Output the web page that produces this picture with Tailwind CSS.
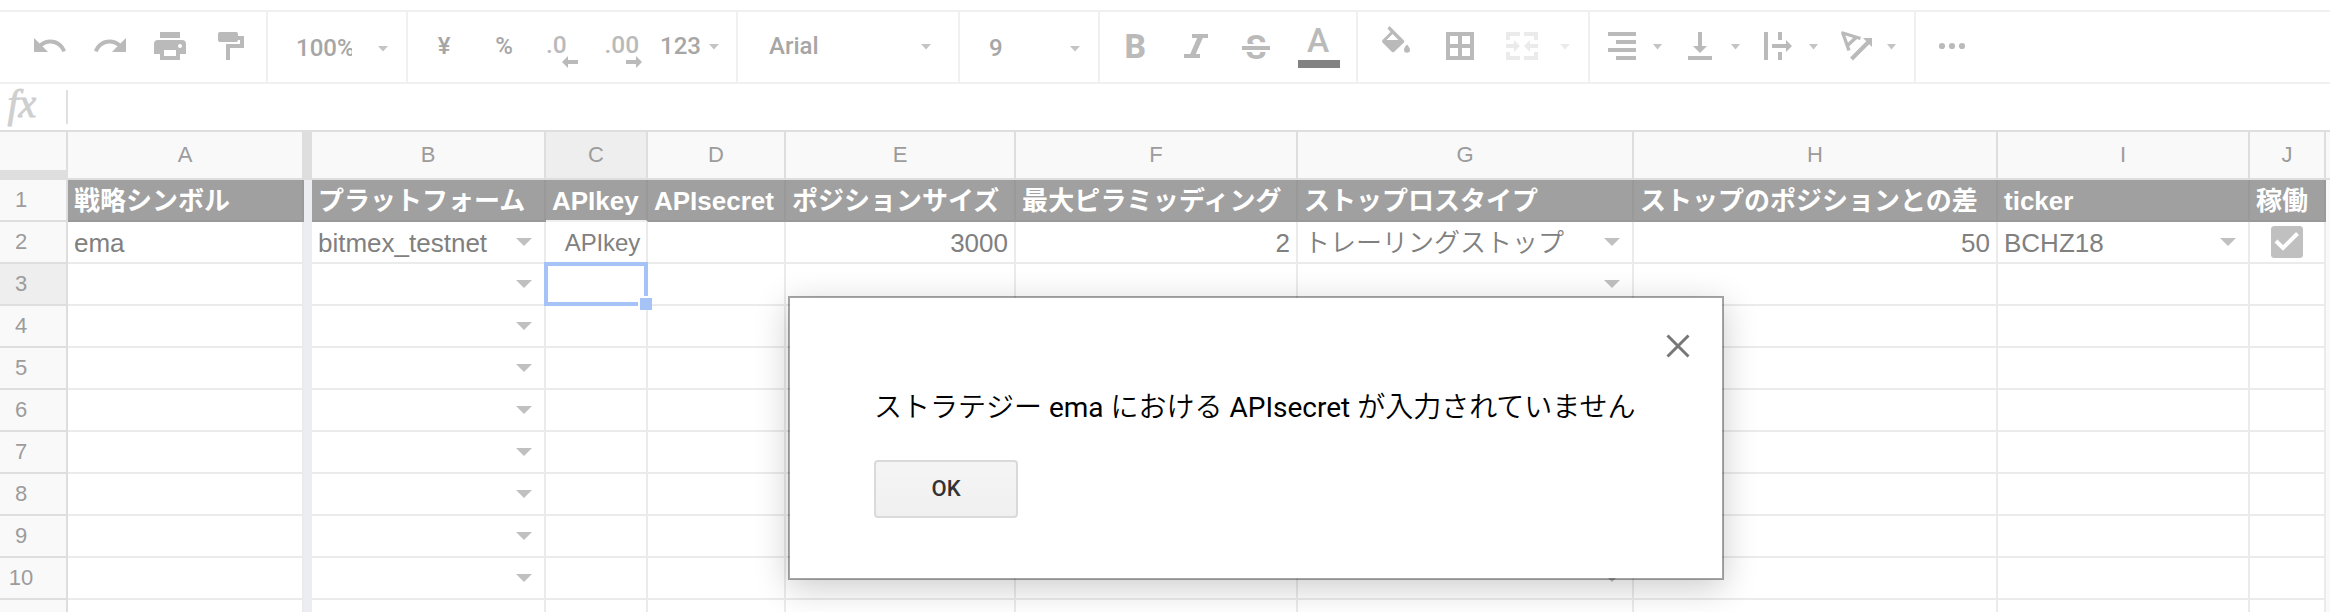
<!DOCTYPE html>
<html lang="ja">
<head>
<meta charset="utf-8">
<title>Spreadsheet</title>
<script src="https://cdn.jsdelivr.net/npm/@tailwindcss/browser@4"></script>
</head>
<body class="relative h-[612px] w-[2330px] overflow-hidden bg-white font-['Liberation_Sans','Noto_Sans_CJK_JP',sans-serif]">

<!-- Toolbar -->
<header class="mt-2.5 flex h-[74px] border-y-2 border-[#f0f0f0] font-[Roboto,sans-serif] text-[24px] leading-9 font-medium text-[#a6a6a6]">
  <div class="flex w-[268px] gap-6 border-r-2 border-[#f0f0f0] pt-4 pl-8">
    <svg class="size-9 fill-[#bababa]" viewBox="0 0 36 36"><path transform="translate(-1.13 -.9) scale(1.563 1.556)" d="M12.5 8c-2.65 0-5.05.99-6.9 2.6L2 7v9h9l-3.62-3.62c1.39-1.16 3.16-1.88 5.12-1.88 3.54 0 6.55 2.31 7.6 5.5l2.37-.78C21.08 11.03 17.15 8 12.5 8z"/></svg>
    <svg class="size-9 fill-[#bababa]" viewBox="0 0 36 36"><path transform="translate(-.4 -.9) scale(1.563 1.556)" d="M18.4 10.6C16.55 8.99 14.15 8 11.5 8c-4.65 0-8.58 3.03-9.96 7.22L3.9 16c1.05-3.19 4.05-5.5 7.6-5.5 1.95 0 3.73.72 5.12 1.88L13 16h9V7l-3.6 3.6z"/></svg>
    <svg class="size-9 fill-[#bababa]" viewBox="0 0 36 36"><path fill-rule="evenodd" d="M8 4H28V10H8zM6 12H30a4 4 0 0 1 4 4V26H28V32H8V26H2V16a4 4 0 0 1 4-4zM12 22V28H24V22zM28 16a2 2 0 1 0 0 4 2 2 0 0 0 0-4z"/></svg>
    <svg class="size-9 fill-[#bababa]" viewBox="0 0 36 36"><path d="M8 4H24a2 2 0 0 1 2 2V8H32V20H18V32H14V16H28V12H26a2 2 0 0 1-2 2H8a2 2 0 0 1-2-2V6a2 2 0 0 1 2-2z"/></svg>
  </div>
  <div class="flex w-[140px] border-r-2 border-[#f0f0f0] pt-[18px] pl-7">
    <span class="w-14 overflow-hidden">100%</span>
    <svg class="mt-4 ml-[26px] h-1.5 w-2.5 fill-[#c4c4c4]" viewBox="0 0 10 6"><path d="M0 0H10L5 5.5z"/></svg>
  </div>
  <div class="flex w-[330px] border-r-2 border-[#f0f0f0] pt-4 pl-[18px]">
    <span class="w-9 text-center">¥</span>
    <span class="ml-6 w-9 text-center">%</span>
    <svg class="ml-6 size-9 overflow-visible fill-[#bababa]" viewBox="0 0 36 36"><text x="0" y="25" font-size="24.500">.0</text><path d="M16 34L22 28V32H32V36H22V40z"/></svg>
    <svg class="ml-6 size-9 overflow-visible fill-[#bababa]" viewBox="0 0 36 36"><text x="-1.500" y="25" font-size="24.500">.00</text><path d="M36 34L30 28V32H20V36H30V40z"/></svg>
    <span class="ml-[18px] w-[49px]">123</span>
    <svg class="mt-4 h-1.5 w-2.5 fill-[#c4c4c4]" viewBox="0 0 10 6"><path d="M0 0H10L5 5.5z"/></svg>
  </div>
  <div class="flex w-[222px] border-r-2 border-[#f0f0f0] pt-4 pl-[31px]">
    <span class="w-[152px]">Arial</span>
    <svg class="mt-4 h-1.5 w-2.5 fill-[#c4c4c4]" viewBox="0 0 10 6"><path d="M0 0H10L5 5.5z"/></svg>
  </div>
  <div class="flex w-[140px] border-r-2 border-[#f0f0f0] pt-[18px] pl-[29px]">
    <span class="w-[81px]">9</span>
    <svg class="mt-4 h-1.5 w-2.5 fill-[#c4c4c4]" viewBox="0 0 10 6"><path d="M0 0H10L5 5.5z"/></svg>
  </div>
  <div class="flex w-[258px] gap-6 border-r-2 border-[#f0f0f0] pt-4 pl-[18px]">
    <svg class="size-9 overflow-visible fill-[#bababa]" viewBox="0 0 36 36"><text x="6.500" y="30" font-size="33.5" font-weight="800">B</text></svg>
    <svg class="size-9 fill-[#bababa]" viewBox="0 0 36 36"><path d="M14 6H30V10H24.800L17.800 26H22V30H6V26H12.200L19.200 10H14z"/></svg>
    <svg class="size-9 overflow-visible fill-[#bababa]" viewBox="0 0 36 36"><text x="18" y="30.500" font-size="34" font-weight="700" text-anchor="middle">S</text><path fill="#fff" d="M0 16H36V24H0z"/><path d="M4 18H32V22H4z"/></svg>
    <svg class="h-11 w-[42px] overflow-visible" viewBox="0 0 42 44"><text x="20" y="24" font-size="33.5" font-weight="500" text-anchor="middle" fill="#bababa">A</text><path fill="#828282" d="M0 32H42V40H0z"/></svg>
  </div>
  <div class="flex w-[232px] border-r-2 border-[#f0f0f0] pt-4 pl-[22px]">
    <svg class="size-9 overflow-visible fill-[#bababa]" viewBox="0 0 36 36"><path fill-rule="evenodd" d="M9.500-2L24 12.500a2 2 0 0 1 0 2L14.500 23.500a2 2 0 0 1-3 0L2.500 14.500a2 2 0 0 1 0-2.500L10.500 4 7.500 .5zM12.500 6L6.500 12H18.500zM27 16.500s3 3.200 3 5.200a3 3 0 0 1-6 0c0-2 3-5.200 3-5.200z"/></svg>
    <svg class="ml-[26px] size-9 fill-[#bababa]" viewBox="0 0 36 36"><path fill-rule="evenodd" d="M4 4H32V32H4zM8 8V16H16V8zM20 8V16H28V8zM8 20V28H16V20zM20 20V28H28V20z"/></svg>
    <svg class="ml-[26px] size-9 fill-[#ebebeb]" viewBox="0 0 36 36"><path d="M2 4H16V8H6V12H2zM20 4H34V12H30V8H20zM2 24H6V28H16V32H2zM30 24H34V32H20V28H30zM2 16H10V12L16 18 10 24V20H2zM34 16H26V12L20 18 26 24V20H34z"/></svg>
    <svg class="mt-4 ml-5 h-1.5 w-2.5 fill-[#ebebeb]" viewBox="0 0 10 6"><path d="M0 0H10L5 5.5z"/></svg>
  </div>
  <div class="flex w-[326px] border-r-2 border-[#f0f0f0] pt-4 pl-3.5">
    <svg class="size-9 fill-[#bababa]" viewBox="0 0 36 36"><path d="M4 4H32V8H4zM12 12H32V16H12zM4 20H32V24H4zM12 28H32V32H12z"/></svg>
    <svg class="mt-4 ml-[13px] h-1.5 w-2.5 fill-[#c4c4c4]" viewBox="0 0 10 6"><path d="M0 0H9L4.500 5.5z"/></svg>
    <svg class="ml-[19px] size-9 fill-[#bababa]" viewBox="0 0 36 36"><path d="M16 4H20V18H25L18 25 11 18H16zM6 28H30V32H6z"/></svg>
    <svg class="mt-4 ml-[13px] h-1.5 w-2.5 fill-[#c4c4c4]" viewBox="0 0 10 6"><path d="M0 0H9L4.500 5.5z"/></svg>
    <svg class="ml-[19px] size-9 fill-[#bababa]" viewBox="0 0 36 36"><path d="M4 4H8V32H4zM18 4H22V12H18zM18 24H22V32H18zM12 16H26V12L32 18 26 24V20H12z"/></svg>
    <svg class="mt-4 ml-[13px] h-1.5 w-2.5 fill-[#c4c4c4]" viewBox="0 0 10 6"><path d="M0 0H9L4.500 5.5z"/></svg>
    <svg class="ml-[19px] size-9 fill-none stroke-[#bababa]" viewBox="0 0 36 36"><path stroke-width="3.400" stroke-linejoin="round" d="M22.500 10.500L4.800 5 11 22.500M18 9.500L9 18"/><path stroke-width="4" d="M13.500 31L31 13.500"/><path fill="#bababa" stroke="none" d="M25 10H34V19z"/></svg>
    <svg class="mt-4 ml-[13px] h-1.5 w-2.5 fill-[#c4c4c4]" viewBox="0 0 10 6"><path d="M0 0H9L4.500 5.5z"/></svg>
  </div>
  <div class="pt-4 pl-[18px]">
    <svg class="size-9 fill-[#bababa]" viewBox="0 0 36 36"><circle cx="8" cy="18" r="3.100"/><circle cx="18" cy="18" r="3.100"/><circle cx="28" cy="18" r="3.100"/></svg>
  </div>
</header>

<!-- Formula bar -->
<div class="flex h-[46px] pt-1.5">
  <div class="h-[34px] w-[68px] border-r-2 border-[#e0e0e0]">
    <svg class="h-[34px] w-[66px] overflow-visible" viewBox="0 0 66 34"><g fill="#cfcfcf" stroke="#cfcfcf" stroke-width=".9" font-family="Liberation Serif, serif" font-style="italic" font-size="40"><text x="7.500" y="27">f</text><text x="18.500" y="27">x</text></g></svg>
  </div>
</div>

<!-- Sheet: header row and cells are generated below -->
<main id="sheet" class="grid grid-cols-[68px_236px_8px_234px_102px_138px_230px_282px_336px_364px_252px_76px_4px] border-t-2 border-[#dedede] text-[26px] leading-[42px] text-[#808080]"></main>

<!-- Active cell -->
<div class="absolute top-[262px] left-[544px] h-11 w-[104px] border-4 border-[#a6c3f8]">
  <div class="absolute -right-2 -bottom-2 size-3.5 border-t-2 border-l-2 border-white bg-[#a6c3f8]"></div>
</div>

<!-- Alert dialog -->
<div class="absolute top-[296px] left-[788px] flex h-[284px] w-[936px] flex-col items-start border-2 border-black/35 bg-white bg-clip-padding pl-[84px] font-[Roboto,'Noto_Sans_CJK_JP',sans-serif] shadow-[0_8px_32px_rgba(0,0,0,0.2)]">
  <svg class="mt-9 mr-8 size-6 self-end fill-none stroke-[#777]" viewBox="0 0 24 24"><path stroke-width="3" d="M1.500 1.500L22.500 22.500M22.500 1.500L1.500 22.500"/></svg>
  <p class="mt-[27px] h-10 text-[28px] leading-10 whitespace-nowrap text-black"><span class="font-['Noto_Sans_CJK_JP_DemiLight','Noto_Sans_CJK_JP'] font-[350]">ストラテジー</span> ema <span class="font-['Noto_Sans_CJK_JP_DemiLight','Noto_Sans_CJK_JP'] font-[350]">における</span> APIsecret <span class="font-['Noto_Sans_CJK_JP_DemiLight','Noto_Sans_CJK_JP'] font-[350]">が入力されていません</span></p>
  <button class="mt-[35px] h-[58px] w-36 rounded-[4px] border-2 border-[#dadada] bg-gradient-to-b from-[#f5f5f5] to-[#f0f0f0] pb-0.5 text-[22px] font-medium text-[#333]">OK</button>
</div>

<script>
const letters = ['A', '', 'B', 'C', 'D', 'E', 'F', 'G', 'H', 'I', 'J'];
const titles = ['戦略シンボル', '', 'プラットフォーム', 'APIkey', 'APIsecret', 'ポジションサイズ', '最大ピラミッディング', 'ストップロスタイプ', 'ストップのポジションとの差', 'ticker', '稼働'];
const values = ['ema', '', 'bitmex_testnet', 'APIkey', '', '3000', '2', 'トレーリングストップ', '50', 'BCHZ18', 'check'];
const arrow = '<svg class="mt-4 mr-3 h-2 w-4 fill-[#c0c0c0]" viewBox="0 0 16 8"><path d="M0 0H16L8 8z"/></svg>';
const check = '<svg class="mx-auto mt-1 size-8" viewBox="0 0 32 32"><rect width="32" height="32" rx="3.500" fill="#c0c0c0"/><path fill="none" stroke="#fff" stroke-width="4" d="M5 15L12 22 26.500 7.500"/></svg>';
let html = '<div class="h-12 border-r-2 border-b-[10px] border-[#dedede] bg-[#f9f9f9]"></div>';
letters.forEach((l, i) => {
  if (i === 1) html += '<div class="bg-[#dedede]"></div>';
  else html += `<div class="h-12 border-r-2 border-b-2 border-[#dedede] text-center text-[22px] leading-[46px] text-[#9c9c9c] ${l === 'C' ? 'bg-[#eeeeee]' : 'bg-[#f9f9f9]'}">${l}</div>`;
});
html += '<div class="border-b-2 border-[#dedede] bg-[#f9f9f9]"></div>';
for (let r = 1; r <= 11; r++) {
  html += `<div class="h-[42px] border-r-2 border-b-2 border-[#dedede] pr-6 text-center text-[22px] leading-10 text-[#9c9c9c] ${r === 3 ? 'bg-[#eeeeee]' : 'bg-[#f9f9f9]'}">${r <= 10 ? r : ''}</div>`;
  letters.forEach((l, i) => {
    if (i === 1) { html += '<div class="bg-[#ecedf3]"></div>'; return; }
    if (r === 1) {
      html += `<div class="h-[42px] border-r-2 border-b-2 border-r-[#999] bg-[#a0a0a0] pl-1.5 font-bold whitespace-nowrap text-white ${l === 'C' ? 'border-b-[#efefef]' : 'border-b-[#999]'} ${l === 'F' ? 'tracking-[0.15px]' : ''}">${titles[i]}</div>`;
      return;
    }
    const v = r === 2 ? values[i] : '';
    const right = 'CEFH'.includes(l);
    const drop = (l === 'B' || l === 'G' || (l === 'I' && r === 2)) ? arrow : '';
    html += `<div class="flex h-[42px] justify-between border-r-2 border-b-2 border-[#ebebeb] bg-white whitespace-nowrap">${v === 'check' ? check : `<span class="${right ? 'ml-auto pr-1.5' : 'pl-1.5'} ${l === 'C' ? 'text-[24px] tracking-[-0.15px]' : ''} ${l === 'G' ? 'font-[350]' : ''}">${v}</span>`}${drop}</div>`;
  });
  html += '<div class="bg-[#f9f9f9]"></div>';
}
document.getElementById('sheet').innerHTML = html;
</script>
</body>
</html>
